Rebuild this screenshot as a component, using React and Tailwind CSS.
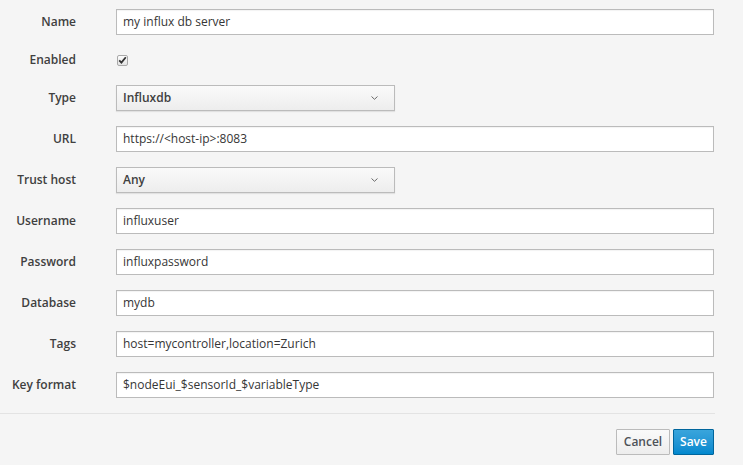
const fields = [
  { label: "Name", value: "my influx db server" },
  { label: "Enabled", type: "checkbox" },
  { label: "Type", value: "Influxdb", type: "select" },
  { label: "URL", value: "https://<host-ip>:8083" },
  { label: "Trust host", value: "Any", type: "select" },
  { label: "Username", value: "influxuser" },
  { label: "Password", value: "influxpassword" },
  { label: "Database", value: "mydb" },
  { label: "Tags", value: "host=mycontroller,location=Zurich" },
  { label: "Key format", value: "$nodeEui_$sensorId_$variableType" },
];

function Field({ field }) {
  if (field.type === "checkbox") {
    return (
      <div className="flex h-[20px] items-center">
        <span className="ml-[1px] flex h-[11px] w-[11px] items-center justify-center rounded-[2px] border border-[#a9a9a9] bg-gradient-to-b from-[#fdfdfd] to-[#e4e4e4]">
          <svg width="9" height="8" viewBox="0 0 9 8">
            <path d="M1.2 4.4 L3.4 6.6 L7.8 1.2" fill="none" stroke="#333" strokeWidth="1.8" />
          </svg>
        </span>
      </div>
    );
  }
  if (field.type === "select") {
    return (
      <div className="flex h-[26px] w-[279px] items-center justify-between border border-[#bbbbbb] bg-gradient-to-b from-[#fafafa] to-[#ededed] pl-[6px] pr-[16px] text-[12px] font-semibold text-[#404040] shadow-[0_1px_1px_rgba(3,3,3,0.08)]">
        <span>{field.value}</span>
        <svg width="7" height="4" viewBox="0 0 7 4">
          <path d="M0.5 0.5 L3.5 3.3 L6.5 0.5" fill="none" stroke="#6a6a6a" strokeWidth="1" />
        </svg>
      </div>
    );
  }
  return (
    <div className="flex h-[26px] w-full items-center border border-[#bbbbbb] bg-white px-[6px] text-[12px] text-[#363636] shadow-[inset_0_1px_1px_rgba(3,3,3,0.05)]">
      {field.value}
    </div>
  );
}

export default function App() {
  return (
    <div
      className="min-h-[465px] w-[743px] bg-[#f5f5f5] pt-[9px]"
      style={{ fontFamily: '"Open Sans", "Noto Sans", sans-serif' }}
    >
      <div className="w-[715px]">
        <div className="flex flex-col gap-[15px] pr-[1px]">
          {fields.map((field) => (
            <div key={field.label} className="flex items-center">
              <label className="w-[116px] shrink-0 pr-[40px] text-right text-[12px] font-semibold text-[#404040]">
                {field.label}
              </label>
              <div className="flex-1">
                <Field field={field} />
              </div>
            </div>
          ))}
        </div>

        <div className="mt-[15px] border-t border-[#e3e3e3]" />

        <div className="flex justify-end gap-[3px] pr-[1px] pt-[15px]">
          <button className="h-[26px] w-[54px] rounded-[1px] border border-[#bbbbbb] bg-gradient-to-b from-[#fafafa] to-[#ededed] text-[12px] font-semibold text-[#4d5258]">
            Cancel
          </button>
          <button className="h-[26px] w-[41px] rounded-[1px] border border-[#00659c] bg-gradient-to-b from-[#39a5dc] to-[#0088ce] text-[12px] font-semibold text-white">
            Save
          </button>
        </div>
      </div>
    </div>
  );
}
